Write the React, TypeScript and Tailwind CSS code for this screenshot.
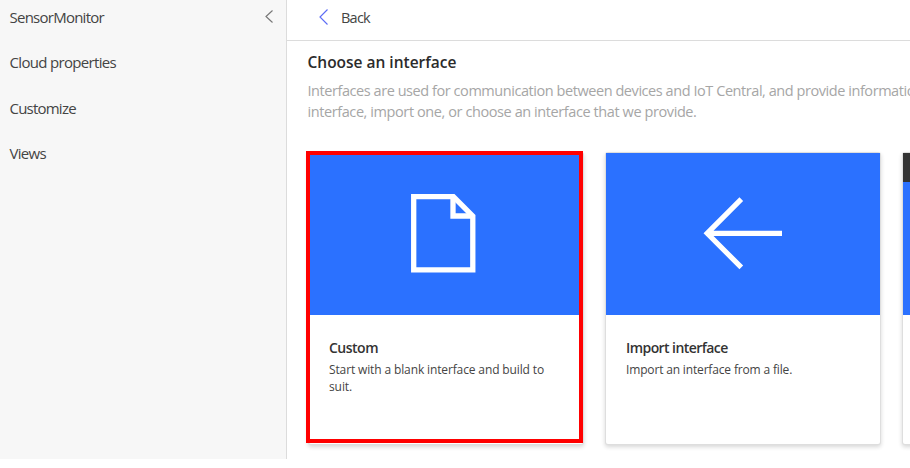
import type { ReactNode } from "react";

function ChevronLeft({ className, w, h }: { className: string; w: number; h: number }) {
  return (
    <svg className={className} width={w} height={h} viewBox={`0 0 ${w} ${h}`} fill="none" stroke="currentColor" strokeWidth="1.15">
      <path d={`M${w - 0.5} 0.5 L1 ${h / 2} L${w - 0.5} ${h - 0.5}`} />
    </svg>
  );
}

function PageIcon() {
  return (
    <svg className="mr-[7px] mb-[2px]" width="66" height="80" viewBox="410 193 66 80" fill="none" stroke="#fff" strokeWidth="5.3">
      <path d="M413.7 196.7 H453.4 L472.8 216.1 V269.8 H413.7 Z" />
      <path d="M453 196.5 V216 H472.8" />
    </svg>
  );
}

function ArrowIcon() {
  return (
    <svg className="mb-[2px]" width="80" height="74" viewBox="703 196 80 74" fill="none" stroke="#fff" strokeWidth="5.2">
      <path d="M741.3 199.2 L707.2 233.3 L741.3 267.4 M708 233.3 H782" />
    </svg>
  );
}

function Card({ title, text, icon }: { title: ReactNode; text: ReactNode; icon: ReactNode }) {
  return (
    <div className="w-[274px] h-[291px] shrink-0 bg-white rounded-[2px] shadow-[0_0_0_1px_#dedede,0_2px_4px_1px_rgba(0,0,0,0.16)]">
      <div className="h-[162px] bg-[#2b71ff] flex items-center justify-center">{icon}</div>
      <div className="pl-5 pt-[23px]">
        <div className="text-[14px] leading-5 text-[#333] font-semibold">{title}</div>
        <div className="text-[12px] leading-[17px] text-[#444] mt-[3px]">{text}</div>
      </div>
    </div>
  );
}

export default function App() {
  return (
    <div className="w-[910px] h-[468px] overflow-hidden bg-white font-['Open_Sans','Noto_Sans',sans-serif] text-[#444]">
      <div className="flex h-[459px]">
        <nav className="w-[287px] shrink-0 bg-[#f7f7f7] border-r border-[#dcdcdc] flex justify-between pl-[9.5px] pr-[13px] text-[15px] leading-5 whitespace-nowrap">
          <div className="flex flex-col gap-[25.3px] pt-[7px]">
            <span className="tracking-[-0.75px]">SensorMonitor</span>
            <span className="tracking-[-0.67px]">Cloud properties</span>
            <span className="tracking-[-0.78px]">Customize</span>
            <span className="tracking-[-0.7px]">Views</span>
          </div>
          <ChevronLeft className="mt-[10px] text-[#777]" w={8} h={13} />
        </nav>
        <main className="flex-1 min-w-0">
          <header className="h-[41px] border-b border-[#dcdcdc] flex pl-[32px]">
            <ChevronLeft className="mt-[9px] text-[#5c6cf5]" w={9} h={16} />
            <span className="ml-[13px] mt-[8px] text-[14.5px] leading-5 tracking-[-0.75px]">Back</span>
          </header>
          <div className="pl-[20.5px] whitespace-nowrap">
            <h1 className="mt-[10px] text-[15.5px] leading-[22px] font-semibold text-[#2b2b2b]"><span className="tracking-[-0.01px]">Choose an interface</span></h1>
            <p className="mt-[7px] text-[14.5px] leading-[21px] text-[#a6a6a6]">
              <span className="tracking-[-0.44px]">Interfaces are used for communication between devices and IoT Central, and provide information</span>
              <br />
              <span className="tracking-[-0.41px]">interface, import one, or choose an interface that we provide.</span>
            </p>
          </div>
          <div className="flex gap-[23px] mt-[31px] pl-[22px]">
            <div className="relative shrink-0">
              <Card
                icon={<PageIcon />}
                title={<span className="tracking-[-0.5px]">Custom</span>}
                text={<><span className="tracking-[-0.13px]">Start with a blank interface and build to</span><br /><span className="tracking-[-0.1px]">suit.</span></>}
              />
              <div className="absolute -left-[3px] -top-[2px] w-[277px] h-[292px] border-4 border-[#ff0000]" />
            </div>
            <Card
              icon={<ArrowIcon />}
              title={<span className="tracking-[-0.57px]">Import interface</span>}
              text={<span className="tracking-[-0.16px]">Import an interface from a file.</span>}
            />
            <div className="relative shrink-0">
              <Card icon={null} title={null} text={null} />
              <div className="absolute left-0 top-0 w-full h-[29px] bg-[#333]" />
            </div>
          </div>
        </main>
      </div>
    </div>
  );
}
